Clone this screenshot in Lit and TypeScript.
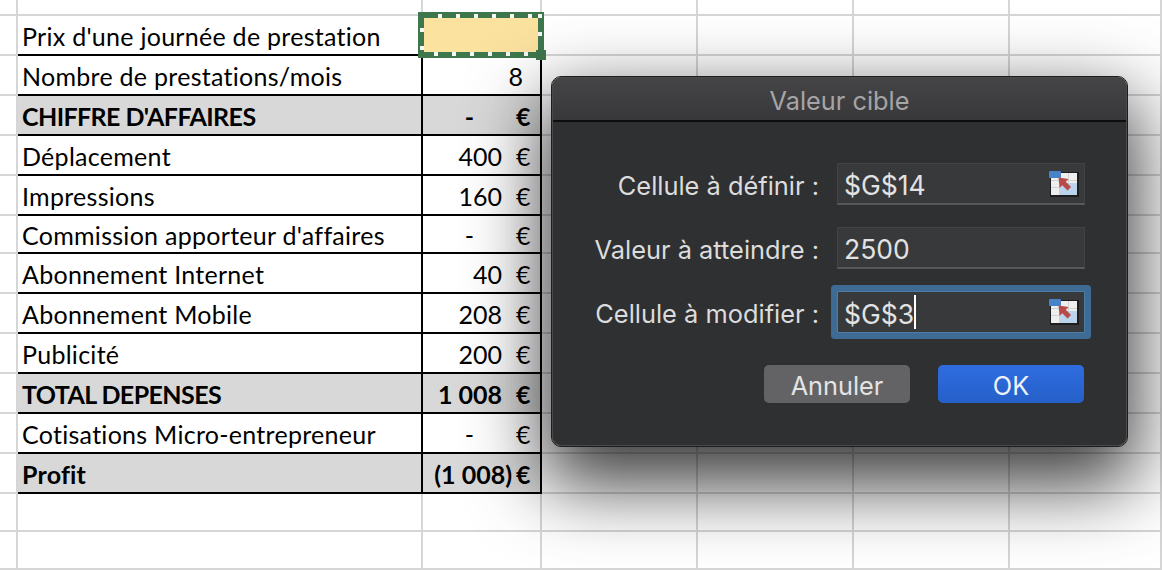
import { LitElement, html, css, svg } from "lit";
import { customElement } from "lit/decorators.js";

type Row = { label: string; num: string; euro: boolean; h: number; cls?: string; valCls?: string };

const rows: Row[] = [
  { label: "Prix d'une journée de prestation", num: "", euro: false, h: 40 },
  { label: "Nombre de prestations/mois", num: "8", euro: false, h: 40, valCls: "plain" },
  { label: "CHIFFRE D'AFFAIRES", num: "-", euro: true, h: 40, cls: "total upper", valCls: "dash" },
  { label: "Déplacement", num: "400", euro: true, h: 40 },
  { label: "Impressions", num: "160", euro: true, h: 40 },
  { label: "Commission apporteur d'affaires", num: "-", euro: true, h: 38, valCls: "dash" },
  { label: "Abonnement Internet", num: "40", euro: true, h: 40 },
  { label: "Abonnement Mobile", num: "208", euro: true, h: 40 },
  { label: "Publicité", num: "200", euro: true, h: 40 },
  { label: "TOTAL DEPENSES", num: "1 008", euro: true, h: 40, cls: "total upper" },
  { label: "Cotisations Micro-entrepreneur", num: "-", euro: true, h: 40, valCls: "dash" },
  { label: "Profit", num: "(1 008)", euro: true, h: 40, cls: "total", valCls: "paren" },
];

const ants: [number, number][] = [
  ...[22, 40, 58, 76, 94, 112].map((x) => [x, 4] as [number, number]),
  ...[18, 36, 54, 72, 90, 108].map((x) => [x, 42] as [number, number]),
  [4, 18],
  [4, 36],
  [122, 4],
  [122, 22],
];

const icon = html`<svg class="ref" width="30" height="26" viewBox="0 0 30 26" aria-hidden="true">
  <rect x="1" y="1" width="29" height="25" fill="#1d1d1e"/>
  <rect x="2" y="2" width="26" height="22" fill="#eeeeee"/>
  <path d="M2 9.500h26M2 16.500h26M10.500 2v22M19.500 2v22" stroke="#d2d2d2" stroke-width="1" fill="none"/>
  <rect x="11" y="12" width="17" height="12" fill="#bcd3ec"/>
  <rect x="0" y="0" width="12" height="7" rx="1" fill="#4a82c8"/>
  <path d="M9.500 6.500l10 1.500-2.700 2.700 5.200 5.200-3.500 3.500-5.200-5.200-2.700 2.700z" fill="#b84a4a"/>
</svg>`;

@customElement("app-root")
export class AppRoot extends LitElement {
  static styles = css`
    :host {
      display: block;
      width: 1162px;
      height: 570px;
      position: relative;
      overflow: hidden;
      background: #fff;
      font-family: "Lato", "Liberation Sans", sans-serif;
    }
    .sheet {
      display: grid;
      grid-template-columns: 18px 405px 119px 156px 156px 156px 152px;
      height: 570px;
    }
    .blank {
      border-right: 2px solid #d6d6d6;
      border-bottom: 2px solid #d6d6d6;
      box-sizing: border-box;
    }
    .table {
      grid-column: 2 / 4;
      grid-row: 2 / 14;
      align-self: start;
      display: grid;
      grid-template-columns: 405px 117px;
      border-top: 2px solid #000;
      border-left: 2px solid #000;
      border-right: 2px solid #000;
      margin: -2px 0 0 -2px;
      width: 526px;
      box-sizing: border-box;
      background: #fff;
    }
    .lab,
    .val {
      box-sizing: border-box;
      border-bottom: 2px solid #000;
      display: flex;
      align-items: center;
      font-size: 25px;
      color: #000;
      white-space: nowrap;
      padding-top: 1px;
    }
    .lab {
      padding-left: 4px;
      border-right: 2px solid #000;
      letter-spacing: 0.28px;
    }
    .val {
      justify-content: flex-end;
      padding-right: 11px;
    }
    .total {
      background: #d8d8d8;
      font-weight: 700;
      letter-spacing: 0.2px;
    }
    .upper { letter-spacing: -0.58px; }
    .val.total { letter-spacing: 0; }
    .eur { margin-left: 14px; width: 13px; text-align: right; }
    .dash .num { margin-right: 28px; }
    .plain { padding-right: 17px; }
    .paren .eur { margin-left: 4px; }
    .selection {
      position: absolute;
      left: 418px;
      top: 12px;
      width: 126px;
      height: 46px;
      background: #fbe29f;
    }
    .selection svg { display: block; }
    .handle {
      position: absolute;
      right: -2px;
      bottom: -2px;
      width: 10px;
      height: 10px;
      background: #3f774d;
    }
    .dialog {
      position: absolute;
      left: 552px;
      top: 77px;
      width: 575px;
      height: 369px;
      box-sizing: border-box;
      background: #2f3032;
      border-radius: 9px;
      border: 1px solid #4a4a4c;
      outline: 1px solid #1d1d1e;
      box-shadow: 0 30px 75px 8px rgba(0, 0, 0, 0.78);
      font-family: "Inter", "Liberation Sans", sans-serif;
      color: #dcdcdc;
      display: flex;
      flex-direction: column;
    }
    .title {
      height: 44px;
      flex: none;
      background: linear-gradient(#454547, #38383a);
      border-bottom: 2px solid #0e0e0f;
      border-radius: 8px 8px 0 0;
      box-sizing: border-box;
      display: flex;
      align-items: center;
      justify-content: center;
      padding-top: 2px;
      color: #a5a5a7;
      font-size: 25.300px;
    }
    .form {
      display: grid;
      grid-template-columns: 267px 248px;
      row-gap: 22px;
      column-gap: 17px;
      padding-top: 41px;
      align-items: center;
    }
    .label {
      text-align: right;
      font-size: 25.400px;
      padding: 3px 1px 0 0;
    }
    .field {
      height: 42px;
      box-sizing: border-box;
      background: #38393b;
      border: 1px solid #434345;
      border-bottom: 2px solid #58585a;
      display: flex;
      align-items: center;
      justify-content: space-between;
      padding: 0 5px 0 6px;
      font-size: 26.500px;
      color: #e2e2e2;
    }
    .field > span { padding-top: 3px; }
    .ref { filter: blur(0.4px); }
    .focus {
      border: 1px solid #4a7ea8;
      box-shadow: 0 0 0 6px #3d6b94;
      border-radius: 1px;
    }
    .caret {
      display: inline-block;
      width: 2px;
      height: 34px;
      background: #fff;
      margin-top: -3px;
    }
    .val-text { display: flex; align-items: center; }
    .actions {
      display: flex;
      justify-content: flex-end;
      gap: 28px;
      padding: 32px 42px 0 0;
    }
    button {
      all: unset;
      box-sizing: border-box;
      width: 146px;
      height: 38px;
      border-radius: 5px;
      display: flex;
      align-items: center;
      justify-content: center;
      padding-top: 2px;
      font-family: inherit;
      font-size: 25.300px;
      color: #e4e4e4;
      background: #636365;
    }
    button.ok {
      background: linear-gradient(#2f6ce0, #2560c8);
      color: #eef2fa;
    }
  `;

  render() {
    const rowTracks = rows.map((r) => `${r.h}px`).join(" ");
    return html`
      <div class="sheet" style="grid-template-rows: 16px ${rowTracks} 38px 38px">
        <div class="table" style="grid-template-rows: ${rowTracks}">
          ${rows.map(
            (r) => html`
              <div class="lab ${r.cls ?? ""}">${r.label}</div>
              <div class="val ${r.cls ?? ""} ${r.valCls ?? ""}">
                <span class="num">${r.num}</span>
                ${r.euro ? html`<span class="eur">€</span>` : ""}
              </div>
            `
          )}
        </div>
        ${Array.from({ length: 81 }, () => html`<div class="blank"></div>`)}
      </div>
      <div class="selection">
        <svg width="126" height="46" viewBox="0 0 126 46" aria-hidden="true">
          <rect x="3" y="3" width="120" height="40" fill="none" stroke="#3f774d" stroke-width="6"/>
          ${ants.map(
            ([x, y]) => svg`<rect x=${x - 2} y=${y - 2} width="4" height="4" fill="#f4f7f4"/>`
          )}
        </svg>
        <div class="handle"></div>
      </div>
      <div class="dialog">
        <div class="title">Valeur cible</div>
        <div class="form">
          <div class="label">Cellule à définir :</div>
          <div class="field"><span>$G$14</span>${icon}</div>
          <div class="label">Valeur à atteindre :</div>
          <div class="field"><span>2500</span></div>
          <div class="label">Cellule à modifier :</div>
          <div class="field focus"><span class="val-text">$G$3<i class="caret"></i></span>${icon}</div>
        </div>
        <div class="actions">
          <button>Annuler</button>
          <button class="ok">OK</button>
        </div>
      </div>
    `;
  }
}
